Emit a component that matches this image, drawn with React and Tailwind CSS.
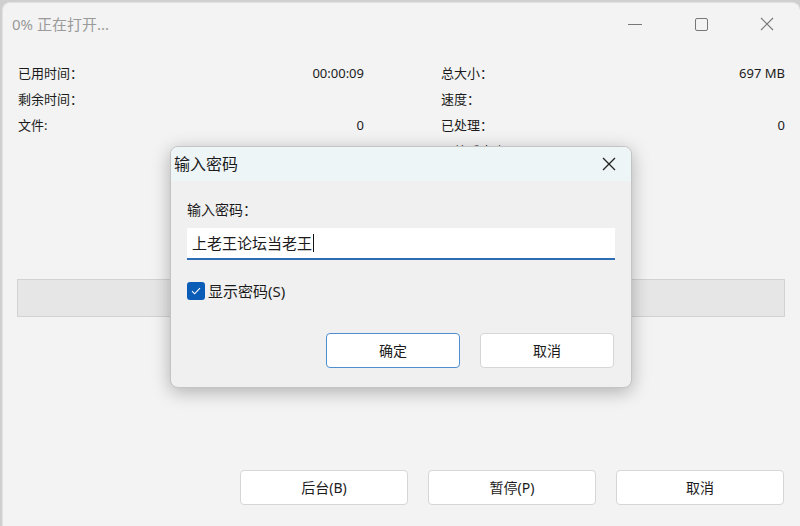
const font = { fontFamily: '"Noto Sans", "Noto Sans CJK SC", sans-serif' };

const InfoRow = ({ label, value }) => (
  <div className="flex justify-between h-[26px] items-center">
    <span>{label}</span>
    <span>{value}</span>
  </div>
);

const WinButton = ({ children, focused }) => (
  <button
    className={`h-[35px] rounded-[4px] bg-white text-[14px] text-[#1b1b1b] ${
      focused ? 'border border-[#4f8fcf]' : 'border border-[#d6d6d6]'
    }`}
  >
    {children}
  </button>
);

const CloseIcon = ({ size = 14, color = '#333', stroke = 1.2 }) => (
  <svg width={size} height={size} viewBox="0 0 14 14">
    <path d="M1 1L13 13M13 1L1 13" stroke={color} strokeWidth={stroke} />
  </svg>
);

export default function App() {
  return (
    <div className="w-[800px] h-[526px] bg-[#cfcfcf] overflow-hidden relative" style={font}>
      <div className="mt-[2px] ml-[2px] h-[540px] bg-[#f3f3f3] rounded-t-[8px] border-t border-l border-[#e2e2e2] flex flex-col text-[#1b1b1b]">
        {/* title bar */}
        <div className="h-[42px] flex items-center justify-between pl-[9px]">
          <span className="text-[15px] text-[#9a9a9a]">0% 正在打开...</span>
          <div className="flex items-center h-full">
            <div className="w-[66px] flex justify-center">
              <div className="w-[14px] h-px bg-[#777]" />
            </div>
            <div className="w-[66px] flex justify-center">
              <div className="w-[13px] h-[13px] border border-[#777] rounded-[2px]" />
            </div>
            <div className="w-[66px] flex justify-center">
              <CloseIcon size={14} color="#777" stroke={1.1} />
            </div>
          </div>
        </div>

        {/* stats */}
        <div className="grid grid-cols-[346px_344px] gap-x-[77px] pl-[15px] pt-[15px] text-[13px] leading-[26px]">
          <div>
            <InfoRow label="已用时间：" value="00:00:09" />
            <InfoRow label="剩余时间：" value="" />
            <InfoRow label="文件:" value="0" />
            <InfoRow label="" value="" />
          </div>
          <div>
            <InfoRow label="总大小：" value="697 MB" />
            <InfoRow label="速度：" value="" />
            <InfoRow label="已处理：" value="0" />
            <InfoRow label="压缩后大小：" value="" />
          </div>
        </div>

        {/* progress */}
        <div className="ml-[14px] mt-[115px] w-[768px] h-[38px] bg-[#e6e6e6] border border-[#d2d2d2]" />

        {/* bottom buttons */}
        <div className="flex gap-[20px] ml-[237px] mt-[153px]">
          <div className="w-[168px] flex flex-col"><WinButton>后台(B)</WinButton></div>
          <div className="w-[168px] flex flex-col"><WinButton>暂停(P)</WinButton></div>
          <div className="w-[168px] flex flex-col"><WinButton>取消</WinButton></div>
        </div>
      </div>

      {/* password dialog */}
      <div className="absolute left-[170px] top-[146px] w-[462px] h-[242px] rounded-[8px] bg-[#f0f0f0] border border-[#c4c4c4] shadow-[0_4px_18px_rgba(0,0,0,0.28)] overflow-hidden flex flex-col text-[#1b1b1b]">
        <div className="h-[34px] bg-[#eef5f7] flex items-center justify-between pl-[3px] pr-[15px]">
          <span className="text-[16px]">输入密码</span>
          <CloseIcon size={14} color="#222" stroke={1.3} />
        </div>
        <div className="px-[16px] pt-[19px] flex flex-col">
          <span className="text-[14px] leading-[20px]">输入密码：</span>
          <div className="mt-[8px] h-[32px] bg-white border-b-2 border-[#2d6db5] flex items-center pl-[5px] text-[15px]">
            <span>上老王论坛当老王</span>
            <span className="w-px h-[18px] bg-[#111] ml-px" />
          </div>
          <div className="mt-[21px] flex items-center gap-[3px] h-[20px]">
            <div className="w-[18px] h-[18px] rounded-[3px] bg-[#0b5cb6] flex items-center justify-center">
              <svg width="10" height="8" viewBox="0 0 10 8">
                <path d="M1 4.2L3.6 6.8L9 1.2" fill="none" stroke="#fff" strokeWidth="1.1" />
              </svg>
            </div>
            <span className="text-[15px]">显示密码(S)</span>
          </div>
          <div className="mt-[32px] flex justify-end gap-[20px] pr-px">
            <div className="w-[134px] flex flex-col"><WinButton focused>确定</WinButton></div>
            <div className="w-[134px] flex flex-col"><WinButton>取消</WinButton></div>
          </div>
        </div>
      </div>
    </div>
  );
}
